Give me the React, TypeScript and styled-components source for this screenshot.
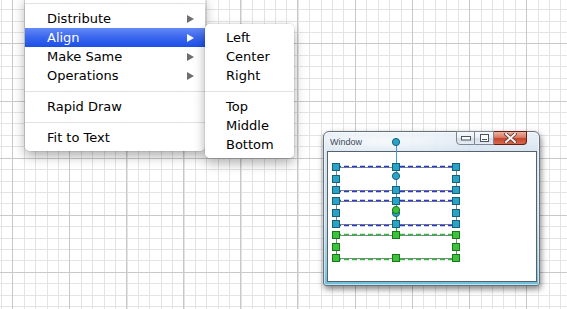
import React from "react";
import styled, { createGlobalStyle } from "styled-components";

const GlobalStyle = createGlobalStyle`
  html, body { margin: 0; padding: 0; background: #fff; }
  body { font-family: "DejaVu Sans", "Liberation Sans", sans-serif; }
`;

const Canvas = styled.div`
  position: relative;
  width: 567px;
  height: 309px;
  overflow: hidden;
  background-color: #fff;
  background-image:
    repeating-linear-gradient(90deg, transparent 0 12px, #c9c9c9 12px 13px, transparent 13px 57.1px),
    repeating-linear-gradient(180deg, transparent 0 43.5px, #c9c9c9 43.5px 44.5px, transparent 44.5px 57.1px),
    repeating-linear-gradient(90deg, transparent 0 0.9px, #e4e4e4 0.9px 1.9px, transparent 1.9px 11.42px),
    repeating-linear-gradient(180deg, transparent 0 9.2px, #e4e4e4 9.2px 10.2px, transparent 10.2px 11.42px);
`;

const MenuPanel = styled.div<{ $left: number; $top: number; $width: number; $sub?: boolean }>`
  position: absolute;
  left: ${(p) => p.$left}px;
  top: ${(p) => p.$top}px;
  width: ${(p) => p.$width}px;
  box-sizing: border-box;
  padding: ${(p) => (p.$sub ? "4px 0" : "0 0 4px")};
  background: rgba(255, 255, 255, 0.98);
  border-radius: ${(p) => (p.$sub ? "5px" : "0 0 5px 5px")};
  box-shadow: 0 5px 12px rgba(0, 0, 0, 0.32), 0 0 0 1px rgba(0, 0, 0, 0.06);
  z-index: ${(p) => (p.$sub ? 3 : 2)};
  font-family: "DejaVu Sans", "Liberation Sans", sans-serif;
  font-size: 13px;
  color: #000;
`;

const Item = styled.div<{ $active?: boolean; $indent: number }>`
  display: flex;
  align-items: center;
  height: 19px;
  line-height: 19px;
  padding: 0 11px 0 ${(p) => p.$indent}px;
  color: ${(p) => (p.$active ? "#fff" : "#000")};
  background: ${(p) =>
    p.$active ? "linear-gradient(180deg, #6489f6 0%, #3a66ee 50%, #1b4fe7 100%)" : "transparent"};
  white-space: nowrap;
`;

const Label = styled.span`
  flex: 1;
`;

const Arrow = styled.span<{ $active?: boolean }>`
  width: 0;
  height: 0;
  border-left: 7px solid ${(p) => (p.$active ? "#fff" : "#6e6e6e")};
  border-top: 4.5px solid transparent;
  border-bottom: 4.5px solid transparent;
`;

const Separator = styled.div`
  height: 1px;
  margin: 6px 0 5px;
  background: #e2e2e2;
`;

const Win = styled.div`
  position: absolute;
  left: 323px;
  top: 131px;
  width: 217px;
  height: 155px;
  box-sizing: border-box;
  display: flex;
  flex-direction: column;
  border: 1px solid #66717c;
  border-radius: 6px 6px 3px 3px;
  background:
    radial-gradient(ellipse 90px 14px at 60px 10px, rgba(255, 255, 255, 0.7), rgba(255, 255, 255, 0) 100%),
    linear-gradient(180deg, rgba(232, 240, 247, 0.88) 0%, rgba(214, 228, 240, 0.92) 12%, #c3dcec 60%, #8fcbe3 88%, #6cbfdc 100%);
  box-shadow: 1px 3px 6px rgba(0, 0, 0, 0.5), inset 0 0 0 1px rgba(255, 255, 255, 0.55);
`;

const TitleBar = styled.div`
  display: flex;
  align-items: flex-start;
  height: 19px;
  padding-left: 6px;
`;

const Title = styled.span`
  font-family: "Liberation Sans", Arial, sans-serif;
  font-size: 9px;
  color: #3b4a58;
  margin-top: 5px;
`;

const Buttons = styled.div`
  display: flex;
  margin: -1px 12px 0 auto;
  height: 14px;
`;

const CapBtn = styled.div<{ $kind: "min" | "max" | "close" }>`
  width: ${(p) => (p.$kind === "close" ? 33 : 19)}px;
  height: 14px;
  box-sizing: border-box;
  display: flex;
  align-items: center;
  justify-content: center;
  border: 1px solid ${(p) => (p.$kind === "close" ? "#6a1d12" : "#7c8792")};
  border-left-width: ${(p) => (p.$kind === "min" ? 1 : 0)}px;
  border-radius: ${(p) => (p.$kind === "min" ? "0 0 0 4px" : p.$kind === "close" ? "0 0 4px 0" : "0")};
  background: ${(p) =>
    p.$kind === "close"
      ? "linear-gradient(180deg, #eab3a3 0%, #d97a64 45%, #c6452c 55%, #d66a4f 100%)"
      : "linear-gradient(180deg, #f8fafc 0%, #eaeff4 45%, #d6dee7 55%, #e6ecf2 100%)"};
`;

const Client = styled.div`
  flex: 1;
  position: relative;
  margin: 0 2px 3px 3px;
  background: #fff;
  border: 1px solid #56616c;
`;

const Diagram = styled.svg`
  position: absolute;
  left: 0;
  top: 0;
  overflow: visible;
`;

const BLUE = { fill: "#29a4c6", stroke: "#16617a" };
const GREEN = { fill: "#3cc33c", stroke: "#1b761b" };

function Sq({ x, y, c }: { x: number; y: number; c: { fill: string; stroke: string } }) {
  return <rect x={x - 3.5} y={y - 3.5} width={7} height={7} fill={c.fill} stroke={c.stroke} strokeWidth={1} />;
}

function Dot({ x, y, c }: { x: number; y: number; c: { fill: string; stroke: string } }) {
  return <circle cx={x} cy={y} r={3.6} fill={c.fill} stroke={c.stroke} strokeWidth={1} />;
}

const cols = [8, 68, 128];

function Shape({ top, bottom, c, dash }: { top: number; bottom: number; c: typeof BLUE; dash: string }) {
  const mid = Math.round((top + bottom) / 2);
  return (
    <g>
      <rect x={8.5} y={top + 0.5} width={120} height={bottom - top} fill="none" stroke="#7d8590" strokeWidth={1} />
      <line x1={8} x2={128} y1={top - 0.5} y2={top - 0.5} stroke={dash} strokeWidth={1.3} strokeDasharray="5 3" />
      <line x1={8} x2={128} y1={bottom + 1.5} y2={bottom + 1.5} stroke={dash} strokeWidth={1.3} strokeDasharray="5 3" />
      {cols.map((x) => (
        <Sq key={"t" + x} x={x} y={top} c={c} />
      ))}
      <Sq x={8} y={mid} c={c} />
      <Sq x={128} y={mid} c={c} />
      {cols.map((x) => (
        <Sq key={"b" + x} x={x} y={bottom} c={c} />
      ))}
    </g>
  );
}

type MenuEntry = { label?: string; sub?: boolean; active?: boolean; sep?: boolean };

const mainItems: MenuEntry[] = [
  { sep: true },
  { label: "Distribute", sub: true },
  { label: "Align", sub: true, active: true },
  { label: "Make Same", sub: true },
  { label: "Operations", sub: true },
  { sep: true },
  { label: "Rapid Draw" },
  { sep: true },
  { label: "Fit to Text" },
];

const subItems: MenuEntry[] = [
  { label: "Left" },
  { label: "Center" },
  { label: "Right" },
  { sep: true },
  { label: "Top" },
  { label: "Middle" },
  { label: "Bottom" },
];

function MenuList({ items, indent }: { items: MenuEntry[]; indent: number }) {
  return (
    <>
      {items.map((it, i) =>
        it.sep ? (
          <Separator key={i} />
        ) : (
          <Item key={i} $active={it.active} $indent={indent}>
            <Label>{it.label}</Label>
            {it.sub && <Arrow $active={it.active} />}
          </Item>
        )
      )}
    </>
  );
}

export default function App() {
  return (
    <>
      <GlobalStyle />
      <Canvas>
        <MenuPanel $left={25} $top={-3} $width={180}>
          <MenuList items={mainItems} indent={22} />
        </MenuPanel>
        <MenuPanel $left={205} $top={24} $width={89} $sub>
          <MenuList items={subItems} indent={21} />
        </MenuPanel>

        <Win>
          <TitleBar>
            <Title>Window</Title>
            <Buttons>
              <CapBtn $kind="min">
                <svg width="10" height="6" viewBox="0 0 10 6">
                  <rect x="0.5" y="1.5" width="9" height="3.5" fill="#fff" stroke="#4a5561" />
                </svg>
              </CapBtn>
              <CapBtn $kind="max">
                <svg width="9" height="8" viewBox="0 0 9 8">
                  <rect x="0.5" y="0.5" width="8" height="7" fill="#fff" stroke="#4a5561" />
                  <line x1="2" x2="7" y1="5.5" y2="5.5" stroke="#4a5561" />
                </svg>
              </CapBtn>
              <CapBtn $kind="close">
                <svg width="13" height="10" viewBox="0 0 13 10">
                  <path d="M2 1 L11 9 M11 1 L2 9" stroke="#6b3a30" strokeWidth="3.6" strokeLinecap="square" />
                  <path d="M2 1 L11 9 M11 1 L2 9" stroke="#f4f4f4" strokeWidth="2" strokeLinecap="square" />
                </svg>
              </CapBtn>
            </Buttons>
          </TitleBar>
          <Client>
            <Diagram width="208" height="129" viewBox="0 0 208 129">
              <Shape top={15} bottom={38} c={BLUE} dash="#2a36c8" />
              <Shape top={49} bottom={72} c={BLUE} dash="#2a36c8" />
              <Shape top={83} bottom={106} c={GREEN} dash="#2fbb2f" />
              <line x1={68.5} x2={68.5} y1={-10} y2={72} stroke="#4b93de" strokeWidth={1} />
              <line x1={68.5} x2={68.5} y1={58} y2={83} stroke="#24a824" strokeWidth={1.2} />
              {[15, 38, 49, 72].map((y) => (
                <Sq key={"m" + y} x={68} y={y} c={BLUE} />
              ))}
              {[83, 106].map((y) => (
                <Sq key={"g" + y} x={68} y={y} c={GREEN} />
              ))}
              <Dot x={68} y={-10} c={BLUE} />
              <Dot x={68} y={24} c={BLUE} />
              <Dot x={68} y={61} c={BLUE} />
              <Dot x={68} y={58} c={GREEN} />
            </Diagram>
          </Client>
        </Win>
      </Canvas>
    </>
  );
}
